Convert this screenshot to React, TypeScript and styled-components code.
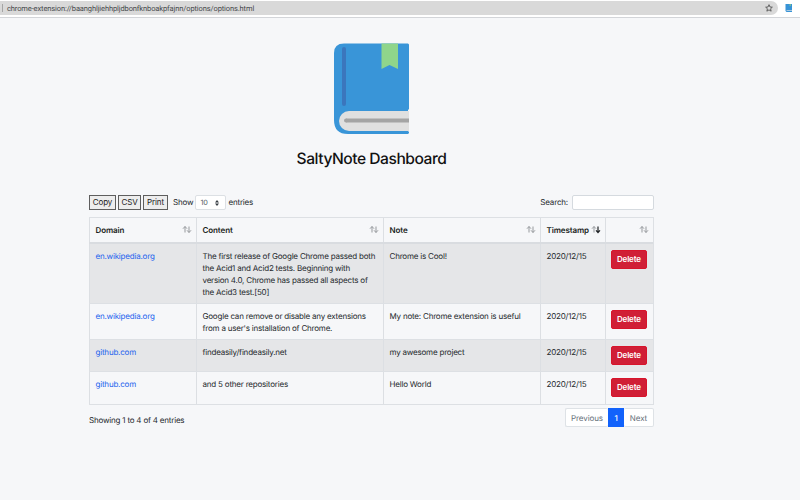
import React from "react";
import styled, { createGlobalStyle } from "styled-components";

const GlobalStyle = createGlobalStyle`
  * { box-sizing: border-box; }
  body {
    margin: 0;
    background: #f6f7f9;
    color: #24282c;
    font-family: Inter, "Liberation Sans", sans-serif;
    font-size: 8px;
    line-height: 12px;
    letter-spacing: -0.2px;
    text-rendering: geometricPrecision;
    overflow: hidden;
  }
  button, input { letter-spacing: inherit; }
`;

const Page = styled.div`
  height: 500px;
`;

const BrowserBar = styled.header`
  height: 18px;
  display: flex;
  align-items: flex-start;
  padding-top: 1px;
  background: #fff;
  border-bottom: 1px solid #d3d5d9;
`;

const AddressField = styled.div`
  width: 778px;
  height: 14px;
  display: flex;
  align-items: center;
  padding: 0 5px 0 2px;
  background: #d9d9d9;
  border-radius: 0 7px 7px 0;
`;

const Divider = styled.span`
  width: 1px;
  height: 8px;
  margin-right: 4px;
  background: #a5a5a5;
`;

const Address = styled.span`
  flex: 1;
  padding-top: 1px;
  font-family: Roboto, "Liberation Sans", sans-serif;
  font-size: 7.5px;
  letter-spacing: -0.115px;
  color: #47494c;
  white-space: nowrap;
`;

const ExtensionIcon = styled.svg`
  margin: 3px 0 0 7px;
`;

const Hero = styled.section`
  width: 743px;
  height: 177px;
  padding-top: 25px;
  display: flex;
  flex-direction: column;
  align-items: center;
`;

const Title = styled.h1`
  margin: 13px 0 0;
  font-size: 15.6px;
  line-height: 22px;
  font-weight: 500;
  letter-spacing: -0.47px;
  color: #111;
  white-space: nowrap;
`;

const Main = styled.main`
  width: 565px;
  margin-left: 89px;
`;

const Toolbar = styled.div`
  height: 22px;
  display: flex;
  align-items: flex-start;
`;

const ToolButton = styled.button<{ $width: number }>`
  width: ${(p) => p.$width}px;
  height: 15px;
  margin: 0 2px 0 0;
  padding: 0;
  border: 1px solid #5e5e5e;
  background: #ededed;
  color: #222;
  font: inherit;
  line-height: 13px;
  letter-spacing: -0.1px;
  white-space: nowrap;
`;

const Label = styled.span`
  line-height: 15px;
  letter-spacing: -0.17px;
  white-space: nowrap;
`;

const PageLength = styled.div`
  display: flex;
  margin-left: 3px;
`;

const LengthSelect = styled.div`
  width: 31px;
  height: 15px;
  margin: 0 2px;
  padding: 1px 6px 0 4px;
  display: flex;
  align-items: center;
  justify-content: space-between;
  border: 1px solid #dce0e4;
  border-radius: 2px;
  background: #fff;
  color: #555c63;
  font-size: 7.3px;
`;

const Search = styled.label`
  display: flex;
  gap: 4px;
  margin-left: auto;
`;

const SearchInput = styled.input`
  width: 82px;
  height: 15px;
  padding: 0 4px;
  border: 1px solid #d5dadf;
  border-radius: 2px;
  background: #fff;
  font: inherit;
`;

const Table = styled.div`
  border-top: 1px solid #dde0e4;
  border-right: 1px solid #dde0e4;
`;

const Row = styled.div<{ $height: number; $striped?: boolean }>`
  display: grid;
  grid-template-columns: 107px 187px 157px 65px 48px;
  height: ${(p) => p.$height}px;
  background: ${(p) => (p.$striped ? "#e5e6e8" : "transparent")};
  border-bottom: 1px solid #dde0e4;
`;

const HeadRow = styled(Row)`
  border-bottom: 2px solid #d9dce0;
`;

const Cell = styled.div`
  padding: 6px 0 0 5.5px;
  border-left: 1px solid #dcdfe3;
  white-space: nowrap;
`;

const HeadCell = styled(Cell)`
  display: flex;
  justify-content: space-between;
  padding-right: 4px;
  font-weight: 600;
  color: #1b1e21;
  letter-spacing: -0.1px;
`;

const SiteLink = styled.a`
  color: #2463ee;
`;

const DeleteButton = styled.button`
  display: block;
  width: 36px;
  height: 19px;
  margin: 0 0 0 -0.6px;
  padding: 0;
  border: 1px solid #d8142b;
  border-radius: 2px;
  background: #d01f36;
  color: #fff;
  font: inherit;
  line-height: 17px;
  font-weight: 600;
  letter-spacing: -0.15px;
`;

const Footer = styled.footer`
  display: flex;
  justify-content: space-between;
  padding-top: 3px;
`;

const Summary = styled.span`
  padding-top: 6px;
`;

const Pagination = styled.nav`
  display: flex;
  height: 19px;
  letter-spacing: -0.1px;
`;

const PageItem = styled.span<{ $width: number; $active?: boolean }>`
  width: ${(p) => p.$width}px;
  display: flex;
  align-items: center;
  justify-content: center;
  border: 1px solid ${(p) => (p.$active ? "#1262fb" : "#dee2e6")};
  border-left-width: ${(p) => (p.$width === 30 ? 0 : 1)}px;
  border-right-width: ${(p) => (p.$width === 43 ? 0 : 1)}px;
  border-radius: ${(p) => (p.$active ? "0" : "2px")};
  background: ${(p) => (p.$active ? "#1262fb" : "#fff")};
  color: ${(p) => (p.$active ? "#fff" : "#66707a")};
  font-weight: ${(p) => (p.$active ? 500 : 400)};
`;

const BookLogo = () => (
  <svg width="75" height="92" viewBox="0 0 75 92">
    <path d="M10 0.5H74L75 1.5V66L74 67V88L75 89V90L74 91H14Q0 91 0 77V10Q0 0.5 10 0.5Z" fill="#3995d8" />
    <path d="M75 68H15A10 10 0 0 0 15 88H75Z" fill="#e0e0e0" />
    <path d="M10 6V61" stroke="#3b76bd" strokeWidth="4" strokeLinecap="round" />
    <path d="M12 77.5H75" stroke="#a4a4a4" strokeWidth="4" />
    <circle cx="12" cy="77.5" r="2" fill="#a4a4a4" />
    <path d="M47.5 0.5H64V26L55.5 22L47.5 26Z" fill="#8fd58b" />
  </svg>
);

const SortIcon = ({ active }: { active?: boolean }) => (
  <svg width="10" height="10" viewBox="0 0 10 10" fill="none">
    <path d="M3 8.5V2.5M1 4.7L3 2.5L5 4.7" stroke="#96999d" />
    <path
      d="M7 2.5V8.5M5 6.3L7 8.5L9 6.3"
      stroke={active ? "#202326" : "#96999d"}
      strokeWidth={active ? 1.2 : 1}
    />
  </svg>
);

const columns = ["Domain", "Content", "Note", "Timestamp", ""];

const notes = [
  {
    domain: "en.wikipedia.org",
    content: [
      "The first release of Google Chrome passed both",
      "the Acid1 and Acid2 tests. Beginning with",
      "version 4.0, Chrome has passed all aspects of",
      "the Acid3 test.[50]",
    ],
    note: "Chrome is Cool!",
    height: 60,
  },
  {
    domain: "en.wikipedia.org",
    content: ["Google can remove or disable any extensions", "from a user's installation of Chrome."],
    note: "My note: Chrome extension is useful",
    height: 36,
  },
  { domain: "github.com", content: ["findeasily/findeasily.net"], note: "my awesome project", height: 32 },
  { domain: "github.com", content: ["and 5 other repositories"], note: "Hello World", height: 33 },
];

export default function App() {
  return (
    <Page>
      <GlobalStyle />
      <BrowserBar>
        <AddressField>
          <Divider />
          <Address>chrome-extension://baanghljiehhpljdbonfknboakpfajnn/options/options.html</Address>
          <svg width="8" height="8" viewBox="0 0 24 24" fill="none" stroke="#505050" strokeWidth="2.6">
            <path d="M12 2L15 9L22 9.6L16.7 14.3L18.4 21.5L12 17.7L5.6 21.5L7.3 14.3L2 9.6L9 9Z" />
          </svg>
        </AddressField>
        <ExtensionIcon width="8" height="8" viewBox="0 0 8 8">
          <path d="M0.5 0H7V8H1.5L0.5 7Z" fill="#3793d7" />
          <path d="M4.5 0H6V2H4.5Z" fill="#72bd99" />
          <path d="M1.5 6.5H7" stroke="#a9c9e0" strokeWidth="1" />
        </ExtensionIcon>
      </BrowserBar>
      <Hero>
        <BookLogo />
        <Title>SaltyNote Dashboard</Title>
      </Hero>
      <Main>
        <Toolbar>
          <ToolButton $width={27}>Copy</ToolButton>
          <ToolButton $width={23}>CSV</ToolButton>
          <ToolButton $width={25}>Print</ToolButton>
          <PageLength>
            <Label>Show</Label>
            <LengthSelect>
              10
              <svg width="4" height="6" viewBox="0 0 4 6" fill="#343a40">
                <path d="M0 2.4L2 0L4 2.4ZM0 3.6H4L2 6Z" />
              </svg>
            </LengthSelect>
            <Label>entries</Label>
          </PageLength>
          <Search>
            <Label>Search:</Label>
            <SearchInput />
          </Search>
        </Toolbar>
        <Table>
          <HeadRow $height={26}>
            {columns.map((name) => (
              <HeadCell key={name}>
                <span>{name}</span>
                <SortIcon active={name === "Timestamp"} />
              </HeadCell>
            ))}
          </HeadRow>
          {notes.map((item, index) => (
            <Row key={index} $height={item.height} $striped={index % 2 === 0}>
              <Cell>
                <SiteLink>{item.domain}</SiteLink>
              </Cell>
              <Cell>
                {item.content.map((line) => (
                  <div key={line}>{line}</div>
                ))}
              </Cell>
              <Cell>{item.note}</Cell>
              <Cell>2020/12/15</Cell>
              <Cell>
                <DeleteButton>Delete</DeleteButton>
              </Cell>
            </Row>
          ))}
        </Table>
        <Footer>
          <Summary>Showing 1 to 4 of 4 entries</Summary>
          <Pagination>
            <PageItem $width={43}>Previous</PageItem>
            <PageItem $width={16} $active>1</PageItem>
            <PageItem $width={30}>Next</PageItem>
          </Pagination>
        </Footer>
      </Main>
    </Page>
  );
}
